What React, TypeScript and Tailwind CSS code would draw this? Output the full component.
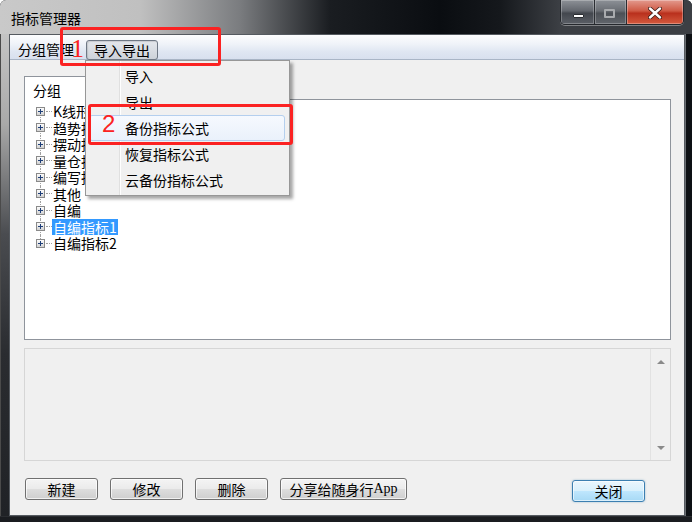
import React from "react";

const PlusBox = () => (
  <svg width="9" height="9" viewBox="0 0 9 9" className="relative block">
    <defs>
      <linearGradient id="pb" x1="0" y1="0" x2="0" y2="1">
        <stop offset="0" stopColor="#ffffff" />
        <stop offset="1" stopColor="#cfcfcf" />
      </linearGradient>
    </defs>
    <rect x="0.5" y="0.5" width="8" height="8" fill="url(#pb)" stroke="#8a8a8a" />
    <path d="M2 4.5H7M4.5 2V7" stroke="#1f3f78" strokeWidth="1" />
  </svg>
);

type RowProps = { label: string; selected?: boolean; pos: "first" | "mid" | "last" };

const Row = ({ label, selected, pos }: RowProps) => (
  <div className="flex items-center h-[16.5px]">
    <div className="relative w-[9px] h-full flex items-center">
      {pos === "first" && (
        <span className="absolute left-[4px] top-1/2 bottom-0 border-l border-dotted border-[#a0a0a0]" />
      )}
      {pos === "mid" && (
        <span className="absolute left-[4px] top-0 bottom-0 border-l border-dotted border-[#a0a0a0]" />
      )}
      {pos === "last" && (
        <span className="absolute left-[4px] top-0 bottom-1/2 border-l border-dotted border-[#a0a0a0]" />
      )}
      <PlusBox />
    </div>
    <span className="ml-[1px] w-[6px] border-t border-dotted border-[#a0a0a0]" />
    {selected ? (
      <span className="h-[16px] leading-[16px] px-[1px] bg-[#3399ff] text-white whitespace-nowrap">{label}</span>
    ) : (
      <span className="h-[16px] leading-[16px] px-[1px] text-black whitespace-nowrap">{label}</span>
    )}
  </div>
);

const Btn = ({ children, w }: { children: React.ReactNode; w: string }) => (
  <div
    className={`${w} h-[22px] rounded-[3px] border border-[#707070] bg-[linear-gradient(to_bottom,#f4f4f4_0%,#ebebeb_48%,#dddddd_52%,#cfcfcf_100%)] shadow-[inset_0_0_0_1px_rgba(255,255,255,0.7)] flex items-center justify-center text-[14px] leading-[16px] text-black`}
  >
    {children}
  </div>
);

export default function App() {
  const items: { label: string; selected?: boolean }[] = [
    { label: "K线形态" },
    { label: "趋势指标" },
    { label: "摆动指标" },
    { label: "量仓指标" },
    { label: "编写指标" },
    { label: "其他" },
    { label: "自编" },
    { label: "自编指标1", selected: true },
    { label: "自编指标2" },
  ];

  return (
    <div className="relative w-[692px] h-[522px] overflow-hidden flex flex-col bg-[#0e1115] rounded-t-[6px] font-['Noto_Sans_CJK_SC',sans-serif]">
      {/* Title bar */}
      <div className="h-[34px] flex items-start justify-between bg-[linear-gradient(to_right,#c9c9c9_0px,#c0c0c0_140px,#7a7c7f_240px,#1a1d21_330px,#0a0d11_440px,#15181c_500px,#3c3f44_560px)]">
        <div className="pl-[11px] pt-[10px] text-[14px] leading-[16px] text-black">指标管理器</div>
        <div className="mr-[8px] flex h-[25px] rounded-b-[5px] border border-t-0 border-[#25282d] shadow-[0_1px_0_rgba(255,255,255,0.35)] overflow-hidden">
          <div className="relative w-[34px] h-full border-r border-[#2a2d32] bg-[linear-gradient(to_bottom,#8d9197_0%,#63676e_45%,#43474e_55%,#5b5f66_100%)] shadow-[inset_0_0_0_1px_rgba(255,255,255,0.25)]">
            <div className="absolute left-[12px] top-[14px] w-[11px] h-[4px] bg-white border border-[#2a2d32] rounded-[1px]" />
          </div>
          <div className="relative w-[32px] h-full border-r border-[#2a2d32] bg-[linear-gradient(to_bottom,#8d9197_0%,#6a6e74_45%,#4c5056_55%,#62666c_100%)] shadow-[inset_0_0_0_1px_rgba(255,255,255,0.25)]">
            <div className="absolute left-[9px] top-[9px] w-[11px] h-[9px] border-[2px] border-[#a9abae] rounded-[1px]" />
          </div>
          <div className="relative w-[56px] h-full bg-[linear-gradient(to_bottom,#e39a8e_0%,#cf5a45_45%,#b9301d_55%,#d55a3e_100%)] shadow-[inset_0_0_0_1px_rgba(255,255,255,0.3)]">
            <svg width="14" height="12" viewBox="0 0 14 12" className="absolute left-[21px] top-[7px]">
              <path d="M2 1.5L12 10.5M12 1.5L2 10.5" stroke="#3a1a14" strokeWidth="4" strokeLinecap="round" />
              <path d="M2 1.5L12 10.5M12 1.5L2 10.5" stroke="#ffffff" strokeWidth="2.4" strokeLinecap="round" />
            </svg>
          </div>
        </div>
      </div>

      {/* Middle: frames + client */}
      <div className="flex h-[482px]">
        <div className="w-[9px] h-full border-l border-[#4a4a4a] bg-[linear-gradient(to_bottom,#c4c4c4_0px,#a9a9a9_90px,#4a4c50_200px,#2a2c30_320px,#202226_482px)]" />
        <div className="w-[676px] h-full border border-[#555a60] flex flex-col bg-[#f0f0f0]">
          {/* Menu bar */}
          <div className="h-[25px] flex items-start border-b border-[#a9b5c6] bg-[linear-gradient(to_bottom,#fdfdfe_0%,#eef2f8_40%,#dfe6f2_70%,#d8e0ee_100%)]">
            <span className="ml-[8px] mt-[6px] text-[14px] leading-[16px] text-black">分组管理</span>
            <div className="ml-[12px] mt-[5px] w-[72px] h-[20px] rounded-[3px] border border-[#6f7885] bg-[linear-gradient(to_bottom,#e4e7ec_0%,#d9dde3_50%,#cdd2d9_100%)] shadow-[inset_1px_1px_1px_rgba(0,0,0,0.12)] flex items-center justify-center text-[14px] leading-[16px] text-black">
              导入导出
            </div>
          </div>

          {/* Body */}
          <div className="flex-1 flex flex-col pl-[14px] pr-[13px] pt-[16px]">
            <div className="flex h-[24px]">
              <div className="w-[240px] h-full border-l border-t border-r border-[#8f949c] bg-white pl-[8px] pt-[5px] text-[14px] leading-[16px] text-black">
                分组
              </div>
              <div className="flex-1 border-b border-[#8f949c]" />
            </div>
            <div className="h-[240px] border-l border-r border-b border-[#8f949c] bg-white pl-[11px] pt-[3px] text-[14px]">
              {items.map((it, i) => (
                <Row
                  key={it.label}
                  label={it.label}
                  selected={it.selected}
                  pos={i === 0 ? "first" : i === items.length - 1 ? "last" : "mid"}
                />
              ))}
            </div>

            {/* Lower panel */}
            <div className="mt-[8px] h-[113px] border border-[#d6d6d6] bg-[#f0f0f0] flex justify-end">
              <div className="w-[20px] h-full border-l border-[#e2e2e2] flex flex-col items-center justify-between pt-[11px] pb-[10px]">
                <svg width="8" height="4" viewBox="0 0 8 4">
                  <path d="M0 4L4 0L8 4Z" fill="#8a8a8a" />
                </svg>
                <svg width="8" height="4" viewBox="0 0 8 4">
                  <path d="M0 0L8 0L4 4Z" fill="#8a8a8a" />
                </svg>
              </div>
            </div>

            {/* Buttons */}
            <div className="mt-[17px] flex items-start">
              <div className="ml-[1px]">
                <Btn w="w-[73px]">新建</Btn>
              </div>
              <div className="ml-[12px]">
                <Btn w="w-[73px]">修改</Btn>
              </div>
              <div className="ml-[12px]">
                <Btn w="w-[73px]">删除</Btn>
              </div>
              <div className="ml-[12px]">
                <Btn w="w-[127px]">
                  分享给随身行<span className="font-['Liberation_Serif',serif]">App</span>
                </Btn>
              </div>
              <div className="ml-auto mr-[26px] mt-[2px] w-[73px] h-[22px] rounded-[3px] border border-[#3c7fb1] bg-[linear-gradient(to_bottom,#eaf6fd_0%,#d9f0fc_48%,#bee6fd_52%,#a7d9f5_100%)] shadow-[inset_0_0_0_1px_rgba(255,255,255,0.6),0_0_2px_rgba(60,127,177,0.5)] flex items-center justify-center text-[14px] leading-[16px] text-black">
                关闭
              </div>
            </div>
          </div>
        </div>
        <div className="w-[7px] h-full bg-[#0d1014] border-l border-[#6a6e73]" />
      </div>
      <div className="h-[6px] bg-[#1a1c20] border-t border-[#2a2c30]" />

      {/* Dropdown menu overlay */}
      <div className="absolute left-[85px] top-[60px] w-[205px] h-[136px] border border-[#979797] bg-[#f0f0f0] shadow-[3px_3px_3px_rgba(0,0,0,0.35)] pt-[2px] z-10">
        <div className="absolute left-[33px] top-0 bottom-0 w-[2px] border-l border-[#e0e0e0] bg-white" />
        {["导入", "导出", "备份指标公式", "恢复指标公式", "云备份指标公式"].map((t, i) =>
          i === 2 ? (
            <div
              key={t}
              className="relative ml-[3px] mr-[4px] h-[26px] rounded-[3px] border border-[#b4cfee] bg-[linear-gradient(to_bottom,#f6f9fe_0%,#eaf1fb_100%)] pl-[35px] flex items-center text-[14px] leading-[16px] text-black"
            >
              {t}
            </div>
          ) : (
            <div
              key={t}
              className="relative ml-[3px] mr-[4px] h-[26px] border border-transparent pl-[35px] flex items-center text-[14px] leading-[16px] text-black"
            >
              {t}
            </div>
          )
        )}
      </div>

      {/* Red annotation boxes */}
      <div className="absolute left-[60px] top-[27px] w-[161px] h-[39px] border-[3px] border-[#fb2222] rounded-[3px] z-20" />
      <div className="absolute left-[71px] top-[36px] text-[26px] leading-none text-[#fb2222] font-['Liberation_Serif',serif] z-20">
        1
      </div>
      <div className="absolute left-[88px] top-[104px] w-[205px] h-[41px] border-[3px] border-[#fb2222] rounded-[3px] z-20" />
      <div className="absolute left-[102px] top-[112px] text-[24px] leading-none text-[#fb2222] font-['Liberation_Sans',sans-serif] z-20">
        2
      </div>
    </div>
  );
}
